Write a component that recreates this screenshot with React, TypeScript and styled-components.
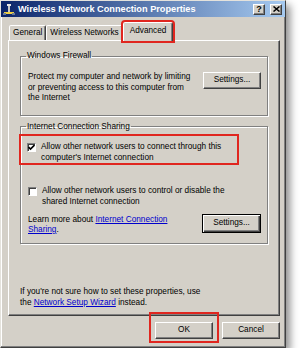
import React from "react";
import styled, { createGlobalStyle } from "styled-components";

const GlobalStyle = createGlobalStyle`
  html, body {
    margin: 0;
    padding: 0;
    background: #fff;
  }
  body {
    font-family: "Liberation Sans", Arial, sans-serif;
    font-size: 8.25px;
    line-height: 10.5px;
    color: #000;
  }
`;

const Window = styled("div")`
  box-sizing: border-box;
  width: 286px;
  height: 348px;
  display: flex;
  flex-direction: column;
  background: #d4d0c8;
  border: 1px solid;
  border-color: #e4e2dc #404040 #404040 #e4e2dc;
  box-shadow: inset -1px -1px 0 #808080, inset 1px 1px 0 #fff,
    4px 5px 8px rgba(0, 0, 0, 0.45);
`;

const TitleBar = styled("div")`
  height: 16px;
  display: flex;
  align-items: center;
  gap: 3px;
  padding: 0 3px 0 2px;
  background: linear-gradient(to right, #0a246a, #a6caf0);
  color: #fff;
  font-weight: bold;
  font-size: 9.2px;
`;

const Title = styled("span")`
  flex: 1;
  white-space: nowrap;
`;

const CaptionButton = styled("div")<{ $gap?: number }>`
  box-sizing: border-box;
  width: 12px;
  height: 11px;
  display: flex;
  align-items: center;
  justify-content: center;
  background: #d4d0c8;
  border: 1px solid;
  border-color: #fff #404040 #404040 #fff;
  box-shadow: inset -1px -1px 0 #808080;
  color: #000;
  font-size: 9px;
  font-weight: bold;
  line-height: 9px;
  margin-left: ${(p) => p.$gap ?? 0}px;
`;

const Body = styled("div")`
  flex: 1;
  display: flex;
  flex-direction: column;
  padding: 5px 5px 8px 7px;
  min-height: 0;
`;

const TabRow = styled("div")`
  display: flex;
  align-items: flex-end;
  height: 19px;
  padding-left: 1px;
  margin-bottom: -1px;
`;

const Tab = styled("div")<{ $active?: boolean }>`
  position: relative;
  z-index: ${(p) => (p.$active ? 2 : 0)};
  box-sizing: border-box;
  height: ${(p) => (p.$active ? 19 : 15)}px;
  margin-bottom: ${(p) => (p.$active ? 0 : 1)}px;
  padding: ${(p) => (p.$active ? "3px 6px 0" : "2px 3px 0")};
  background: #d4d0c8;
  border: 1px solid;
  border-bottom: none;
  border-color: #fff #404040 transparent #fff;
  border-radius: 2px 2px 0 0;
  box-shadow: inset -1px 0 0 #808080;
  white-space: nowrap;
  outline: ${(p) => (p.$active ? "2px solid #e0261f" : "none")};
  outline-offset: 0px;
`;

const Panel = styled("div")`
  flex: 1;
  display: flex;
  flex-direction: column;
  padding: 10px 11px 7px 11px;
  border: 1px solid;
  border-color: #fff #404040 #404040 #fff;
  box-shadow: inset -1px -1px 0 #808080;
`;

const Group = styled("fieldset")<{ $top?: number; $pad: string }>`
  margin: ${(p) => p.$top ?? 0}px 0 0 0;
  padding: ${(p) => p.$pad};
  min-inline-size: 0;
  border: 1px solid #808080;
  box-shadow: 1px 1px 0 #fff, inset 1px 1px 0 #fff;
`;

const Legend = styled("legend")`
  padding: 0 1px;
  margin-left: -2px;
  line-height: 10.5px;
`;

const Row = styled("div")<{ $top?: number }>`
  display: flex;
  align-items: flex-start;
  justify-content: space-between;
  margin-top: ${(p) => p.$top ?? 0}px;
`;

const Text = styled("div")<{ $width: number }>`
  width: ${(p) => p.$width}px;
  margin-top: 0.5px;
`;

const Button = styled("div")<{ $default?: boolean }>`
  box-sizing: border-box;
  width: ${(p) => (p.$default ? 59 : 58)}px;
  height: ${(p) => (p.$default ? 19 : 17)}px;
  display: flex;
  align-items: center;
  justify-content: center;
  background: #d4d0c8;
  border: 1px solid;
  border-color: ${(p) => (p.$default ? "#000" : "#fff #404040 #404040 #fff")};
  box-shadow: ${(p) =>
    p.$default
      ? "inset 1px 1px 0 #fff, inset -1px -1px 0 #404040, inset -2px -2px 0 #808080"
      : "inset -1px -1px 0 #808080"};
  flex-shrink: 0;
`;

const Callout = styled("div")<{ $w: number; $pad: string; $m: string }>`
  box-sizing: border-box;
  width: ${(p) => p.$w}px;
  border: 2px solid #e0261f;
  padding: ${(p) => p.$pad};
  margin: ${(p) => p.$m};
`;

const CheckRow = styled("div")<{ $top?: number }>`
  display: flex;
  align-items: flex-start;
  gap: 5px;
  margin-top: ${(p) => p.$top ?? 0}px;
`;

const Box = styled("div")`
  box-sizing: border-box;
  width: 9px;
  height: 9px;
  margin-top: 1px;
  flex-shrink: 0;
  background: #fff;
  border: 1px solid;
  border-color: #808080 #fff #fff #808080;
  box-shadow: inset 1px 1px 0 #404040;
  display: flex;
  align-items: center;
  justify-content: center;
`;

const Label = styled("div")`
  max-width: 196px;
`;

const Link = styled("a")`
  color: #0000cc;
  text-decoration: underline;
`;

const Footnote = styled("div")`
  margin-top: auto;
`;

const Footer = styled("div")`
  display: flex;
  justify-content: flex-end;
  align-items: flex-start;
  margin-top: 6px;
`;

const Check = ({ checked }: { checked?: boolean }) => (
  <Box>
    {checked && (
      <svg width="7" height="7" viewBox="0 0 7 7">
        <path d="M0.5 3 L2.5 5 L6.5 1" stroke="#000" strokeWidth="1.7" fill="none" />
      </svg>
    )}
  </Box>
);

const NetIcon = () => (
  <svg width="12" height="12" viewBox="0 0 12 12">
    <rect x="5" y="2" width="2" height="7" fill="#c8c8c8" />
    <rect x="1" y="9" width="10" height="2" fill="#f0d040" />
    <rect x="4" y="1" width="4" height="2" fill="#e8e8e8" />
    <rect x="0" y="10" width="3" height="2" fill="#6a7a9a" />
    <rect x="9" y="10" width="3" height="2" fill="#6a7a9a" />
  </svg>
);

const App: React.FC = function () {
  return (
    <>
      <GlobalStyle />
      <Window>
        <TitleBar>
          <NetIcon />
          <Title>Wireless Network Connection Properties</Title>
          <CaptionButton>?</CaptionButton>
          <CaptionButton $gap={2}>
            <svg width="7" height="6" viewBox="0 0 7 6">
              <path d="M0.5 0.5 L6.5 5.5 M6.5 0.5 L0.5 5.5" stroke="#000" strokeWidth="1.5" />
            </svg>
          </CaptionButton>
        </TitleBar>
        <Body>
          <TabRow>
            <Tab>General</Tab>
            <Tab>Wireless Networks</Tab>
            <Tab $active>Advanced</Tab>
          </TabRow>
          <Panel>
            <Group $pad="10px 6px 11px 7px">
              <Legend>Windows Firewall</Legend>
              <Row>
                <Text $width={166}>
                  Protect my computer and network by limiting or preventing access to this
                  computer from the Internet
                </Text>
                <Button>Settings...</Button>
              </Row>
            </Group>
            <Group $top={6} $pad="2px 6px 7px 7px">
              <Legend>Internet Connection Sharing</Legend>
              <Callout $w={220} $pad="6px 0 0 6px" $m="0 0 0 -9px">
                <CheckRow>
                  <Check checked />
                  <Label>Allow other network users to connect through this computer's Internet connection</Label>
                </CheckRow>
              </Callout>
              <CheckRow $top={21}>
                <Check />
                <Label>Allow other network users to control or disable the shared Internet connection</Label>
              </CheckRow>
              <Row $top={7}>
                <Text $width={150}>
                  Learn more about <Link>Internet Connection</Link>
                  <br />
                  <Link>Sharing</Link>.
                </Text>
                <Button $default>Settings...</Button>
              </Row>
            </Group>
            <Footnote>
              If you're not sure how to set these properties, use
              <br />
              the <Link>Network Setup Wizard</Link> instead.
            </Footnote>
          </Panel>
          <Footer>
            <Callout $w={70} $pad="8px 3px 2px 4px" $m="-10px 3px -4px 0">
              <Button>OK</Button>
            </Callout>
            <Button>Cancel</Button>
          </Footer>
        </Body>
      </Window>
    </>
  );
};

export default App;
